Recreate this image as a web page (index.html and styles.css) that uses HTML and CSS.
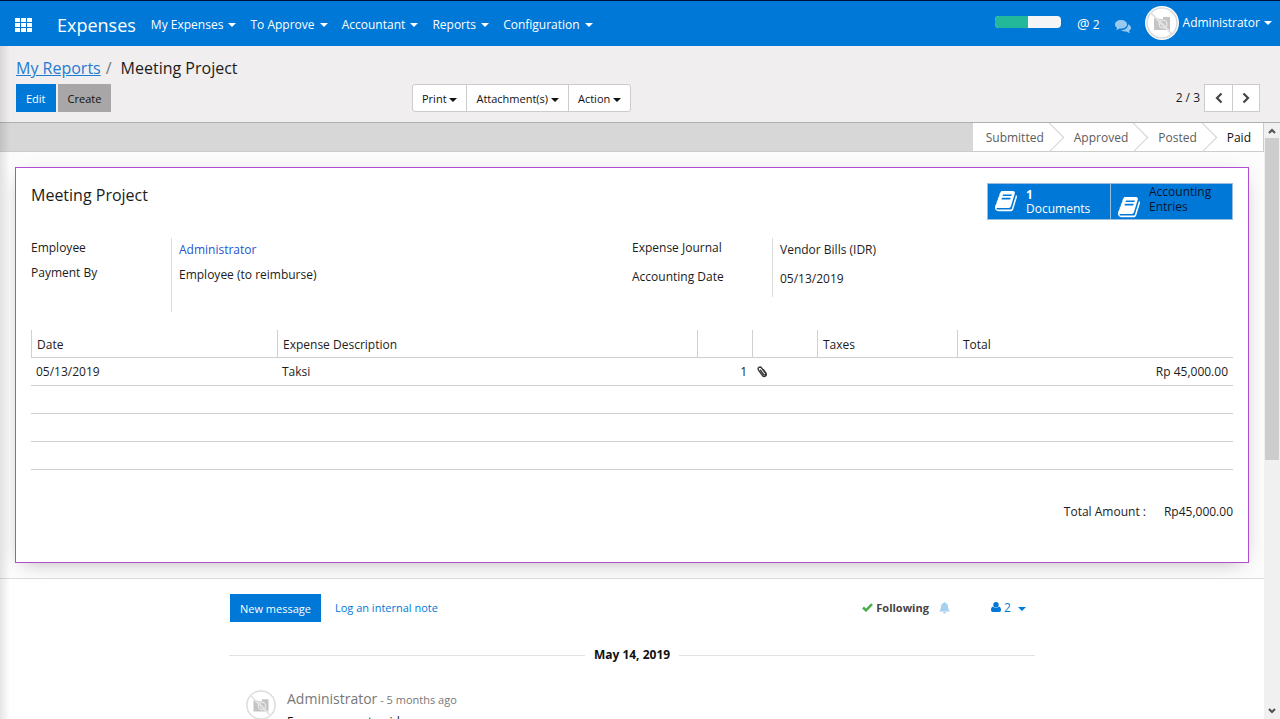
FILE: index.html
```html
<!DOCTYPE html>
<html lang="en">
<head>
  <meta charset="UTF-8">
  <title>Meeting Project - Expenses</title>
  <link rel="stylesheet" href="styles.css">
</head>
<body>

  <!-- shared icons -->
  <svg class="icon-defs" aria-hidden="true">
    <symbol id="no-photo" viewBox="0 0 34 34">
      <circle cx="17" cy="17" r="17" fill="#fff"/>
      <circle cx="17" cy="17" r="15" fill="none" stroke="#dcdcdc" stroke-width="1.6"/>
      <path d="M9 12h4l1 1h4v-2h7v13H9z" fill="#c4c4c4"/>
      <circle cx="18" cy="18" r="4.600" fill="#e6e6e6"/>
      <circle cx="18" cy="18" r="3.200" fill="#c4c4c4"/>
      <path d="M6 7l21 21" stroke="#f4f4f4" stroke-width="2"/>
      <path d="M6 7l21 21" stroke="#dcdcdc" stroke-width="1.200"/>
    </symbol>
    <symbol id="book" viewBox="0 0 1664 1664">
      <path fill="currentColor" d="M1639 350q40 57 18 129l-275 906q-19 64-76.500 107.500T1183 1536H260q-77 0-148.500-53.500T12 1351q-24-67-2-127 0-4 3-27t4-37q1-8-3-21.500t-3-19.500q2-11 8-21t16.500-23.500T52 1051q23-38 45-91.500t30-91.500q3-10 .5-30t-.5-28q3-11 17-28t17-23q21-36 42-92t25-90q1-9-2.500-32t.5-28q4-13 22-30.500t22-22.500q19-26 42.500-84.500T340 283q1-8-3-25.500t-2-26.500q2-8 9-18t18-23 17-21q8-12 16.500-30.500t15-35 16-36 19.500-32T469.500 12t36-11.500T553 6l-1 3q38-9 51-9h761q74 0 114 56t18 130l-274 906q-36 119-71.500 153.500T1022 1280H153q-27 0-38 15-11 16-1 43 24 70 144 70h923q29 0 56-15.500t35-41.500l300-987q7-22 5-57 38 15 59 43zM575 352q-4 13 2 22.500t20 9.500h608q13 0 25.500-9.500T1247 352l21-64q4-13-2-22.500t-20-9.500H638q-13 0-25.500 9.500T596 288zM492 608q-4 13 2 22.500t20 9.500h608q13 0 25.500-9.500T1164 608l21-64q4-13-2-22.500t-20-9.500H555q-13 0-25.500 9.500T513 544z"/>
    </symbol>
  </svg>

  <header class="navbar">
    <button class="apps-btn" aria-label="Applications">
      <svg width="17" height="14" viewBox="0 0 17 14" fill="currentColor">
        <path d="M0 0h5v4H0zM6 0h5v4H6zM12 0h5v4h-5zM0 5h5v4H0zM6 5h5v4H6zM12 5h5v4h-5zM0 10h5v4H0zM6 10h5v4H6zM12 10h5v4h-5z"/>
      </svg>
    </button>
    <a class="brand" href="#">Expenses</a>
    <nav class="menu">
      <a href="#">My Expenses <span class="caret"></span></a>
      <a href="#">To Approve <span class="caret"></span></a>
      <a href="#">Accountant <span class="caret"></span></a>
      <a href="#">Reports <span class="caret"></span></a>
      <a href="#">Configuration <span class="caret"></span></a>
    </nav>
    <div class="systray">
      <div class="progress"><div class="progress-bar" style="width: 50%"></div></div>
      <a class="mentions" href="#"><span class="at">@</span> 2</a>
      <a class="chats" href="#" aria-label="Conversations">
        <svg width="16" height="13" viewBox="0 0 16 13" fill="currentColor">
          <path d="M6 0c3.400 0 6 1.900 6 4.300s-2.600 4.400-6 4.400c-.5 0-1 0-1.500-.1C3.600 9.400 2.500 9.900 1 10c.6-.6 1-1.300 1.100-2C.8 7.200 0 5.900 0 4.300 0 1.900 2.600 0 6 0z"/>
          <path d="M13 4.200c1.800.7 3 2 3 3.500 0 1.300-.8 2.400-2 3.100.1.800.5 1.400 1.200 2.200-1.600-.1-2.800-.7-3.700-1.500-2 .3-4.100-.2-5.400-1.400 3.900 0 7-2.400 6.900-5.900z"/>
        </svg>
      </a>
      <a class="user" href="#">
        <svg class="avatar" width="34" height="34"><use href="#no-photo"/></svg>
        Administrator <span class="caret"></span>
      </a>
    </div>
  </header>

  <div class="control-panel">
    <ol class="breadcrumb">
      <li><a href="#">My Reports</a></li>
      <li>Meeting Project</li>
    </ol>
    <div class="cp-row">
      <div class="cp-left">
        <button class="btn btn-primary">Edit</button>
        <button class="btn btn-default">Create</button>
      </div>
      <div class="cp-sidebar">
        <button>Print <span class="caret"></span></button>
        <button>Attachment(s) <span class="caret"></span></button>
        <button>Action <span class="caret"></span></button>
      </div>
      <div class="pager">
        <span>2 / 3</span>
        <div class="pager-btns">
          <button aria-label="Previous"><svg width="8" height="12" viewBox="0 0 8 12"><path d="M6.500 1.500L2 6l4.500 4.500"/></svg></button>
          <button aria-label="Next"><svg width="8" height="12" viewBox="0 0 8 12"><path d="M1.500 1.500L6 6l-4.500 4.500"/></svg></button>
        </div>
      </div>
    </div>
  </div>

  <div class="content">
    <main class="form-view">
      <div class="statusbar">
        <ul class="steps">
          <li>Submitted</li>
          <li>Approved</li>
          <li>Posted</li>
          <li class="active">Paid</li>
        </ul>
      </div>

      <div class="sheet-bg">
        <section class="sheet">
          <div class="sheet-head">
            <h1>Meeting Project</h1>
            <div class="stat-buttons">
              <button class="stat">
                <svg width="22" height="22"><use href="#book"/></svg>
                <span class="stat-text"><b>1</b><br>Documents</span>
              </button>
              <button class="stat stat-dark">
                <svg width="22" height="22"><use href="#book"/></svg>
                <span class="stat-text">Accounting<br>Entries</span>
              </button>
            </div>
          </div>

          <div class="groups">
            <dl class="group group-left">
              <dt>Employee</dt><dd><a href="#">Administrator</a></dd>
              <dt>Payment By</dt><dd>Employee (to reimburse)</dd>
            </dl>
            <dl class="group group-right">
              <dt>Expense Journal</dt><dd>Vendor Bills (IDR)</dd>
              <dt>Accounting Date</dt><dd>05/13/2019</dd>
            </dl>
          </div>

          <table class="lines">
            <thead>
              <tr>
                <th class="col-date">Date</th>
                <th>Expense Description</th>
                <th class="col-qty"></th>
                <th class="col-attach"></th>
                <th class="col-taxes">Taxes</th>
                <th class="col-total">Total</th>
              </tr>
            </thead>
            <tbody>
              <tr>
                <td>05/13/2019</td>
                <td>Taksi</td>
                <td class="num">1</td>
                <td>
                  <svg class="clip" width="10" height="12" viewBox="0 0 10 12" fill="none" stroke="#333" stroke-width="1.300" stroke-linecap="round">
                    <path d="M3.400 4.200l3.200 4.300c1 1.200 2.600 0 1.800-1.300L4.600 2C3.200 0 .1 1.600 1.500 4.200l4 5.400c1.600 2.200 4.800.5 3.500-2.400L6.400 3.600"/>
                  </svg>
                </td>
                <td></td>
                <td class="num">Rp 45,000.00</td>
              </tr>
              <tr><td colspan="6"></td></tr>
              <tr><td colspan="6"></td></tr>
              <tr><td colspan="6"></td></tr>
            </tbody>
          </table>

          <div class="total">
            <span>Total Amount :</span>
            <span>Rp45,000.00</span>
          </div>
        </section>
      </div>

      <section class="chatter">
        <div class="chatter-top">
          <button class="btn btn-primary">New message</button>
          <a class="log-note" href="#">Log an internal note</a>
          <div class="followers">
            <button class="following">
              <svg width="11" height="9" viewBox="0 0 11 9" fill="none" stroke="#4cae4c" stroke-width="2.600"><path d="M1 4.500l3 2.800L10 1.200"/></svg>
              Following
            </button>
            <svg class="bell" width="11" height="12" viewBox="0 0 11 12" fill="#a6d0f0"><path d="M5.500 0c.6 0 .8.400.8.900 1.700.4 2.700 1.700 2.700 3.400 0 2.600.8 3.900 2 5.200H0c1.200-1.300 2-2.600 2-5.200C2 2.600 3 1.300 4.700.9c0-.5.2-.9.8-.9zM4 10h3c0 2-3 2-3 0z"/></svg>
            <button class="follower-count">
              <svg width="10" height="10" viewBox="0 0 10 10" fill="currentColor"><circle cx="5" cy="2.700" r="2.700"/><path d="M2 4.600c1.600 1.600 4.400 1.600 6 0 1.400.3 2 1.700 2 3.400 0 1.200-.7 2-1.800 2H1.800C.7 10 0 9.200 0 8c0-1.700.6-3.100 2-3.400z"/></svg>
              2 <span class="caret"></span>
            </button>
          </div>
        </div>
        <div class="day">May 14, 2019</div>
        <article class="message">
          <svg width="32" height="32"><use href="#no-photo"/></svg>
          <div>
            <p class="message-head"><span class="author">Administrator</span> - 5 months ago</p>
            <p class="message-body">Expense report paid</p>
          </div>
        </article>
      </section>
    </main>

    <div class="scrollbar" aria-hidden="true">
      <svg width="8" height="6" viewBox="0 0 8 6"><path d="M1 5l3-3 3 3"/></svg>
      <div class="thumb"></div>
      <svg width="8" height="6" viewBox="0 0 8 6"><path d="M1 1l3 3 3-3"/></svg>
    </div>
  </div>

</body>
</html>
```

FILE: styles.css
```css
* {
  box-sizing: border-box;
}

body {
  margin: 0;
  height: 100vh;
  display: flex;
  flex-direction: column;
  overflow: hidden;
  font-family: "Open Sans", "Noto Sans", sans-serif;
  font-size: 12px;
  line-height: 16px;
  color: #1c1c1c;
  background-color: #fff;
}

/* soft shade down the left edge of the window */
body::before {
  content: "";
  position: absolute;
  left: 0;
  top: 46px;
  bottom: 0;
  width: 10px;
  background: linear-gradient(to right, rgba(0,0,0,0.1), rgba(0,0,0,0));
}

a {
  color: #0078d7;
  text-decoration: none;
}

button {
  font: inherit;
  color: inherit;
  background: none;
  border: none;
  padding: 0;
  cursor: pointer;
}

.icon-defs {
  position: absolute;
  width: 0;
  height: 0;
}

.caret {
  display: inline-block;
  border: 4px solid transparent;
  border-top-color: currentColor;
  border-bottom: none;
  vertical-align: middle;
}

/* top bar */
.navbar {
  display: flex;
  align-items: center;
  height: 46px;
  padding: 2px 8px 0 15px;
  border-top: 1px solid #00103c;
  background-color: #0078d7;
  color: #fff;
  flex: none;
}

.navbar a {
  color: #fff;
}

.apps-btn svg {
  display: block;
}

.brand {
  margin-left: 25px;
  font-size: 18px;
  line-height: 24px;
}

.menu {
  display: flex;
  gap: 14px;
  margin-left: 15px;
}

.menu .caret {
  margin-left: 2px;
}

.systray {
  display: flex;
  align-items: center;
  margin-left: auto;
}

.progress {
  width: 66px;
  height: 12px;
  margin: 0 16px 5px 0;
  border-radius: 4px;
  background-color: #f5f5f5;
  overflow: hidden;
}

.progress-bar {
  height: 100%;
  background-color: #23b899;
}

.at {
  font-size: 14px;
}

.chats {
  margin: 3px 14px 0 15px;
  opacity: 0.6;
}

.chats svg {
  display: block;
}

.user {
  display: flex;
  align-items: center;
  gap: 4px;
  padding-bottom: 3px;
}

/* control panel */
.control-panel {
  padding: 10px 16px 10px;
  background-color: #f0eeee;
  border-bottom: 1px solid #afafaf;
  flex: none;
}

.breadcrumb {
  display: flex;
  list-style: none;
  margin: 0;
  padding: 0;
  font-size: 16px;
  line-height: 24px;
}

.breadcrumb a {
  color: #1f7cd2;
  text-decoration: underline;
}

.breadcrumb li + li::before {
  content: "/";
  padding: 0 9px 0 5px;
  color: #777;
}

.cp-row {
  display: grid;
  grid-template-columns: 396px 1fr auto;
  margin-top: 4px;
  font-size: 11px;
}

.cp-left {
  display: flex;
  gap: 2px;
}

.btn {
  height: 28px;
  padding: 1px 10px 0;
  font-size: 11px;
}

.btn-primary {
  background-color: #0078d7;
  color: #fff;
}

.btn-default {
  background-color: #a8a6a6;
  color: #111;
}

.cp-sidebar {
  display: flex;
  justify-self: start;
  height: 28px;
  border: 1px solid #ccc;
  border-radius: 3px;
  background-color: #fff;
  color: #111;
}

.cp-sidebar button {
  padding: 1px 9px 0;
}

.cp-sidebar button + button {
  border-left: 1px solid #ccc;
}

.pager {
  display: flex;
  align-items: center;
  gap: 4px;
  margin-right: 4px;
  font-size: 12px;
}

.pager-btns {
  display: flex;
  height: 28px;
  border: 1px solid #ccc;
  background-color: #fff;
}

.pager-btns button {
  display: flex;
  align-items: center;
  justify-content: center;
  width: 27px;
}

.pager-btns button + button {
  border-left: 1px solid #ccc;
}

.pager-btns path {
  fill: none;
  stroke: #444;
  stroke-width: 2.2px;
}

/* scrolling area */
.content {
  display: flex;
  flex: 1;
  min-height: 0;
}

.form-view {
  flex: 1;
  min-width: 0;
  overflow: hidden;
}

.scrollbar {
  display: flex;
  flex-direction: column;
  align-items: center;
  width: 16px;
  padding: 5px 0;
  background-color: #f0f0f0;
}

.scrollbar path {
  fill: none;
  stroke: #505050;
  stroke-width: 2px;
}

.thumb {
  width: 14px;
  height: 55%;
  margin: 4px 0 auto;
  background-color: #cdcdcd;
}

.statusbar {
  display: flex;
  justify-content: flex-end;
  height: 29px;
  background-color: #d7d7d7;
  border-bottom: 1px solid #ccc;
}

.steps {
  display: flex;
  margin: 0;
  padding: 0;
  list-style: none;
  background-color: #fff;
  color: #5c5c5c;
  border-right: 1px solid #ccc;
}

.steps li {
  position: relative;
  padding: 7px 12px 5px 13px;
}

.steps li + li {
  padding-left: 18px;
}

/* chevron between two steps */
.steps li + li::before {
  content: "";
  position: absolute;
  left: -17px;
  top: 4px;
  width: 20px;
  height: 20px;
  border: 1px solid #d0d0d0;
  border-left: none;
  border-bottom: none;
  transform: rotate(45deg);
}

.steps .active {
  color: #111;
}

.sheet-bg {
  padding: 15px 15px;
  background-color: #fcfcfc;
  border-bottom: 1px solid #ddd;
}

.sheet {
  padding: 15px;
  background-color: #fff;
  border: 1px solid #ad4fd0;
  box-shadow: 0 5px 20px -8px rgba(0,0,0,0.35);
}

.sheet-head {
  display: flex;
  justify-content: space-between;
  align-items: flex-start;
}

.sheet-head h1 {
  margin: 0;
  font-size: 16px;
  font-weight: normal;
  line-height: 24px;
}

.stat-buttons {
  display: flex;
  height: 37px;
  border: 1px solid #98bfe0;
  background-color: #0078d7;
}

.stat {
  display: flex;
  align-items: center;
  gap: 9px;
  width: 122px;
  padding-left: 7px;
  color: #fff;
  text-align: left;
}

.stat + .stat {
  border-left: 1px solid #98bfe0;
}

.stat-text {
  line-height: 14px;
  padding-top: 1px;
}

.stat-dark {
  align-items: flex-end;
}

.stat-dark .stat-text {
  align-self: flex-start;
  padding-top: 0;
  line-height: 15px;
  color: #0a1430;
}

/* field groups */
.groups {
  display: grid;
  grid-template-columns: 1fr 1fr;
  align-items: start;
  margin-top: 18px;
}

.group {
  display: grid;
  grid-template-columns: 140px 1fr;
  margin: 0;
}

.group dt {
  padding-top: 2px;
}

.group dd {
  margin: 0;
  padding: 4px 7px 0;
  border-left: 1px solid #ddd;
}

.group a {
  color: #2456d0;
}

.group-left {
  grid-template-rows: 25px 49px;
}

.group-right {
  grid-template-rows: 29px 30px;
}

/* expense lines */
.lines {
  width: 100%;
  margin-top: 18px;
  border-collapse: separate;
  border-spacing: 0;
  table-layout: fixed;
}

.lines th,
.lines td {
  height: 28px;
  padding: 1px 5px 0;
  border-bottom: 1px solid #d0d0d0;
  text-align: left;
  font-weight: normal;
}

.lines th {
  padding-top: 3px;
  border-left: 1px solid #d0d0d0;
}

.lines .num {
  text-align: right;
}

.col-date {
  width: 246px;
}

.col-qty {
  width: 55px;
}

.col-attach {
  width: 65px;
}

.col-taxes {
  width: 140px;
}

.col-total {
  width: 276px;
}

.clip {
  display: block;
}

.total {
  display: flex;
  justify-content: flex-end;
  gap: 18px;
  padding: 34px 0 27px;
}

/* chatter */
.chatter {
  max-width: 806px;
  margin: 0 auto;
  padding-top: 15px;
}

.chatter-top {
  display: flex;
  align-items: center;
  padding: 0 9px 0 1px;
}

.log-note {
  margin-left: 14px;
  font-size: 11px;
}

.followers {
  display: flex;
  align-items: center;
  margin-left: auto;
}

.following {
  font-size: 11px;
  font-weight: bold;
  color: #444;
}

.bell {
  margin: 0 41px 0 10px;
}

.follower-count {
  color: #0078d7;
}

.follower-count .caret {
  margin-left: 4px;
}

.day {
  display: flex;
  align-items: center;
  gap: 9px;
  margin-top: 25px;
  font-weight: bold;
  color: #111;
}

.day::before,
.day::after {
  content: "";
  flex: 1;
  border-top: 1px solid #e2e2e2;
}

.message {
  display: flex;
  gap: 10px;
  margin: 26px 0 0 16px;
}

.message p {
  margin: 0;
}

.message-head {
  font-size: 11px;
  line-height: 20px;
  color: #777;
}

.author {
  font-size: 14px;
}

.message-body {
  padding-top: 4px;
  color: #111;
}
```
